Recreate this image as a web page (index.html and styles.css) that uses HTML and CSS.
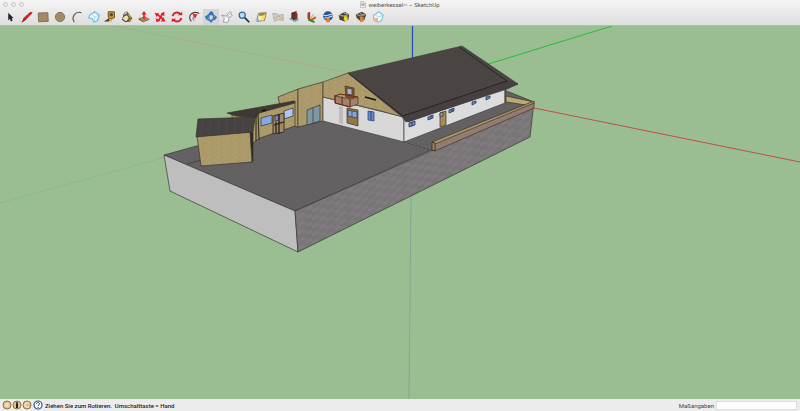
FILE: index.html
```html
<!DOCTYPE html>
<html lang="de">
<head>
    <meta charset="UTF-8">
    <meta name="viewport" content="width=device-width, initial-scale=1.0">
    <title>weiberkessel~ – SketchUp</title>
    <link rel="stylesheet" href="styles.css">
</head>
<body>
    <header class="window-header">
        <div class="titlebar">
            <div class="window-buttons">
                <button aria-label="Schließen"></button>
                <button aria-label="Minimieren"></button>
                <button aria-label="Zoomen"></button>
            </div>
            <div class="title">
                <svg class="doc-icon" viewBox="0 0 6 7"><path d="M.5.5h3.5l1.5 1.5v4.5h-5z" fill="#eee" stroke="#aaa" stroke-width=".6"/><path d="M1.500 2h3v3h-3z" fill="#d4a797"/></svg>
                <span>weiberkessel~ – SketchUp</span>
            </div>
        </div>
        <nav class="toolbar">
            <button aria-label="Auswählen"><svg viewBox="0 0 16 16"><path d="M6 3v9l2-2 1 3 2-1-1-3h2z" fill="#222"/></svg></button>
            <button aria-label="Linie"><svg viewBox="0 0 16 16"><path d="M2 14l2-5 8-7 2 1-7 8z" fill="#d3202b"/><path d="M2 14l4-3M11 5l3-2" stroke="#532224"/></svg></button>
            <button aria-label="Rechteck"><svg viewBox="0 0 16 16"><path d="M2.500 3.500l11-.5.5 10-11 .5z" fill="#a28a65" stroke="#7a6a50"/></svg></button>
            <button aria-label="Kreis"><svg viewBox="0 0 16 16"><circle cx="8" cy="8" r="5.300" fill="#a28a65" stroke="#7a6a50"/></svg></button>
            <button aria-label="Bogen"><svg viewBox="0 0 16 16"><path d="M5 14C1 8 6 1 13 3" fill="none" stroke="#555" stroke-width="1.300"/></svg></button>
            <button aria-label="Komponente"><svg viewBox="0 0 16 16"><path d="M3 6l6-4 5 4-2 6-4 2-2-4-4-1z" fill="#f0f8fa" stroke="#72bfdf" stroke-width="1.400"/><path d="M6 6l3 2 4-2M9 8l-1 5" fill="none" stroke="#9dd4e8"/></svg></button>
            <button aria-label="Maßband"><svg viewBox="0 0 16 16"><path d="M6 2h7v7l-5 1-2-2z" fill="#df9c17" stroke="#574220"/><circle cx="9.500" cy="5.500" r="2" fill="#4d4b45"/><path d="M1 13l6-4 3 1-3 3z" fill="#47413b"/><path d="M7 10h4l-1 3H7z" fill="#e5b31f"/></svg></button>
            <button aria-label="Farbeimer"><svg viewBox="0 0 16 16"><path d="M4 6l5-3 5 6-2 4-6 1-4-3z" fill="#59513c"/><path d="M5 7l3-1 2 3-3 4-4-3z" fill="#e8dfbf"/><path d="M9 5l4 4M11 10l1 3" stroke="#bda52e" stroke-width="1.500"/><path d="M4 8c0-6 4-7 6-4" fill="none" stroke="#555"/></svg></button>
            <button aria-label="Drücken/Ziehen"><svg viewBox="0 0 16 16"><path d="M2 9l7-2 5 3-7 3z" fill="#ad8154"/><path d="M2 9v2l5 3 7-3v-1l-7 3z" fill="#6b5138"/><path d="M8 1L5 5h2v5h2V5h2z" fill="#e12325"/></svg></button>
            <button aria-label="Verschieben"><svg viewBox="0 0 16 16"><path d="M5 5l7 6M11 4l-5 9" stroke="#e41c22" stroke-width="2"/><path d="M2 3l5 1-3 4zM9 4l4-2v5zM14 13l-5 0 3-5zM3 9l5 3-4 2z" fill="#e41c22"/></svg></button>
            <button aria-label="Drehen"><svg viewBox="0 0 16 16"><path d="M3 7a5 5 0 0 1 9-2M13 9a5 5 0 0 1-9 2" fill="none" stroke="#dd1e25" stroke-width="2"/><path d="M9 6h5V2zM7 10H2v4z" fill="#dd1e25"/></svg></button>
            <button aria-label="Versatz"><svg viewBox="0 0 16 16"><path d="M5 13C0 7 6 0 14 4" fill="none" stroke="#444" stroke-width="1.200"/><path d="M8 12C6 9 7 7 10 7" fill="none" stroke="#555"/><path d="M6 4l6 1-3 5z" fill="#df2528"/></svg></button>
            <button class="active" aria-label="Rotieren"><svg viewBox="0 0 16 16"><path d="M8 2c-4 3-3 9 0 12M2 8c4-4 9-3 12 0M2 8c2 5 9 5 12 0M8 2c4 2 4 8 0 12" fill="none" stroke="#2f75c4" stroke-width="1.300"/><path d="M5 5l4-4 2 5zM1 7h5l-3 4zM11 8l4 0-3 4z" fill="#2f75c4"/></svg></button>
            <button aria-label="Hand"><svg viewBox="0 0 16 16"><path d="M4 14l1-5-3-3 5 1 4-5 2 1-1 2 2 1-4 4-1 4z" fill="#fff" stroke="#929292"/><path d="M7 8l4-3M8 9l4-2" stroke="#aaa"/></svg></button>
            <button aria-label="Zoom"><svg viewBox="0 0 16 16"><path d="M8 8l6 6" stroke="#202832" stroke-width="2"/><circle cx="6" cy="6" r="3.500" fill="#b9dbf0" stroke="#366a96" stroke-width="1.400"/></svg></button>
            <button aria-label="Karte"><svg viewBox="0 0 16 16"><path d="M5 4l9-1-2 9-9 1z" fill="#faf0bf" stroke="#777060"/><path d="M6 3h7l-1 3-6 1z" fill="#a88448"/><path d="M9 7h3l-1 5H8z" fill="#ffe620"/><path d="M2 10h4l-1 3H2z" fill="#8dbfd8"/></svg></button>
            <button aria-label="Gelände" disabled><svg viewBox="0 0 16 16"><path d="M2 4l4 0 3 2 5-1v7l-6-1-4 2z" fill="#d4c9bc" stroke="#b5aca1"/><path d="M4 9l5-2 4 3" fill="none" stroke="#b6a89a"/></svg></button>
            <button aria-label="Gebäude"><svg viewBox="0 0 16 16"><path d="M2 10l5-2 7 3-5 3z" fill="#5fb2c9"/><path d="M5 3l6-2v9l-4 2-2-2z" fill="#682a20"/><path d="M9 3l3 1v6l-3 1z" fill="#7f3527"/><path d="M6 10v2l3 1" stroke="#e0aa7c" fill="none"/></svg></button>
            <button aria-label="Position"><svg viewBox="0 0 16 16"><path d="M4 3l3-1v10l-3-2z" fill="#b13727"/><path d="M6 11l7-4 1 2-5 4z" fill="#bd6c1f"/><path d="M5 11l7 3" stroke="#25852d" stroke-width="2"/><path d="M7 10l4-5" stroke="#d19333"/></svg></button>
            <button aria-label="Google Earth"><svg viewBox="0 0 16 16"><circle cx="8" cy="7" r="5.500" fill="#24559c"/><path d="M3 6c4 2 7-2 10-1M4 9c4 1 6-2 9-2" stroke="#d4e3ef" fill="none" stroke-width="1.300"/><path d="M6 9h4v5H6v-3z" fill="#df8128"/></svg></button>
            <button aria-label="Modelle laden"><svg viewBox="0 0 16 16"><path d="M2 6l7-4 5 3-1 6-4 2-6-2z" fill="#484039"/><path d="M3 6l5 1 5-2M8 3l4 2" stroke="#aa9e82" fill="none" stroke-width="1.500"/><path d="M8 7h4v3h1l-3 4-3-4h1z" fill="#eadb20"/></svg></button>
            <button aria-label="Modelle teilen"><svg viewBox="0 0 16 16"><path d="M2 5l7-3 5 3-2 6-4 2-5-4z" fill="#52453b"/><path d="M3 5l5 2 5-2M7 4l4 2" stroke="#a9947d" fill="none" stroke-width="1.400"/><path d="M7 8h4v5l-4 1v-4z" fill="#e97e26"/></svg></button>
            <button aria-label="Komponente teilen"><svg viewBox="0 0 16 16"><path d="M3 6l6-4 5 4-2 6-4 2-5-4z" fill="#eff8fa" stroke="#86c5de" stroke-width="1.400"/><path d="M5 6l4 2 4-2" fill="none" stroke="#9ad1e2"/><path d="M4 9h4v4H3v-3z" fill="#e8b58d"/></svg></button>
        </nav>
    </header>

    <main class="viewport">
        <svg class="model" viewBox="0 26 800 373" preserveAspectRatio="xMidYMid slice" role="img" aria-label="3D-Modell">
            <defs>
                <pattern id="brick" width="14" height="8" patternUnits="userSpaceOnUse" patternTransform="matrix(1 -.44 0 1 298 211)">
                    <rect width="14" height="8" fill="#7c7779"/>
                    <path d="M0 2h8M7 6h7" stroke="#736e70" stroke-width="1.200"/>
                    <path d="M8 2h6M0 6h7" stroke="#858083" stroke-width="1.200"/>
                </pattern>
                <pattern id="paving" width="5" height="4" patternUnits="userSpaceOnUse" patternTransform="matrix(1 -.42 .9 .4 0 0)">
                    <rect width="5" height="4" fill="#656264"/>
                    <path d="M0 .5h5M1 0v4" stroke="#5e5b5d" stroke-width=".6"/>
                </pattern>
                <pattern id="stone" width="9" height="5" patternUnits="userSpaceOnUse">
                    <rect width="9" height="5" fill="#ad9b6c"/>
                    <path d="M0 1h6M3 3h5" stroke="#a49163" stroke-width=".7"/>
                    <path d="M1 2h3" stroke="#b5a374" stroke-width=".8"/>
                </pattern>
                <pattern id="tiles" width="4" height="4" patternUnits="userSpaceOnUse" patternTransform="rotate(-14)">
                    <rect width="4" height="4" fill="#4b4644"/>
                    <path d="M0 1h4" stroke="#464140" stroke-width=".6"/>
                </pattern>
            </defs>

            <rect x="-400" y="-400" width="1600" height="1200" fill="#9abe91"/>

            <!-- axes -->
            <g fill="none" stroke-width=".8">
                <path d="M412.500 26v35" stroke="#244cb0" stroke-width="1.200"/>
                <path d="M411 194l-2 205" stroke="#7f9f94"/>
                <path d="M485 65l127-39" stroke="#28bc36" stroke-width="1"/>
                <path d="M166 157L0 203" stroke="#72b575" stroke-dasharray="1 1"/>
                <path d="M534 108l266 54" stroke="#bd5141" stroke-width="1"/>
                <path d="M348 73L115 26" stroke="#b19b79" stroke-dasharray="1 1"/>
            </g>

            <!-- ground slab -->
            <g stroke="#383638" stroke-width=".7" stroke-linejoin="round">
                <path d="M164 155l65-18 95-22 180-25 30 12-101 47-138 62z" fill="url(#paving)"/>
                <path d="M164 155l131 56 3 41-128-61z" fill="#bfbebf"/>
                <path d="M295 211l138-61 101-48-4 35-232 115z" fill="url(#brick)"/>
                <path d="M187 164l22-6" fill="none"/>
            </g>

            <!-- annex -->
            <g stroke="#3b3327" stroke-width=".7" stroke-linejoin="round">
                <path d="M278 97l20-8v38l-4-1-14-20z" fill="url(#stone)"/>
                <path d="M298 89l25-7v39l-25 6z" fill="url(#stone)"/>
                <path d="M232 115l26-2 37-12v25l-35 12-7 5-21 3z" fill="url(#stone)"/>
                <path d="M227 113l67-12 1 2-36 10-3 5-20-2z" fill="#3e3937"/>
                <path d="M258 113l1 27M256 116v25" fill="none" stroke-width="1.200"/>
                <path d="M307 110l13-5v16l-13 4z" fill="#7c98a4"/>
                <path d="M313 108v15" fill="none"/>
                <path d="M261 118l11-3v8l-11 3z" fill="#86a6df"/>
                <path d="M284 111l9-3v8l-9 3z" fill="#abc6f2"/>
                <path d="M273 116l11-3v19l-11 2z" fill="#a1896a" stroke-width="1"/>
                <path d="M275 116l4-1v5l-4 1z" fill="#668bda"/>
                <path d="M279 114v20M274 125l10-3M276 122v11" fill="none" stroke="#1e1a17" stroke-width="1.200"/>
                <path d="M262 111l4-1" stroke="#111" fill="none" stroke-width="1.500"/>
            </g>

            <!-- shed -->
            <g stroke="#38332c" stroke-width=".7" stroke-linejoin="round">
                <path d="M249 133l4-1v29l-2 2z" fill="#292821"/>
                <path d="M197 136l53-4 2 30-51 4z" fill="url(#stone)"/>
                <path d="M198 119l57-2-2 15-57 5z" fill="#474242"/>
                <path d="M203 119l-2 17M211 119l-2 16M219 118l-1 17M227 118l-1 16M235 118v16M243 118v15M250 117v15" stroke="#524c4b" fill="none"/>
            </g>

            <!-- main house -->
            <g stroke="#403d3c" stroke-width=".7" stroke-linejoin="round">
                <path d="M323 97l81 20v25l-81-21z" fill="#d8d8d9"/>
                <path d="M404 117l101-29v15l-101 39z" fill="#dcdcdd"/>
                <path d="M323 82l25-9 55 44-22-6-58-14z" fill="url(#stone)"/>
                <path d="M348 73l114-27 56 38-11 5-101 33-4-5z" fill="url(#tiles)"/>
                <path d="M403 116l104-35 11 3-110 38z" fill="#464140"/>
                <path d="M403 116l104-35-48-34M348 73l55 43" fill="none" stroke="#181717"/>
                <path d="M342 107v17M340 106v17" stroke="#8a8a8a" fill="none"/>
            </g>
            <g stroke="#3c3325" stroke-width=".7">
                <path d="M345 86l9 2v10l-8-1z" fill="#8d552d"/>
                <path d="M347 88l5 1v6l-5-1z" fill="#a7b1d4"/>
                <path d="M347 108l11 2v16l-11-3z" fill="#917845"/>
                <path d="M348 110l9 2v6l-9-2z" fill="#7ea8eb"/>
                <path d="M352 111v6" />
                <path d="M335 96l16 3 7-2v7l-8 3-15-4z" fill="#a4806a" stroke="#542a19"/>
                <path d="M335 96l5-2 18 3M335 95v8l15 4v-8M342 97v8" fill="none" stroke="#602917" stroke-width="1"/>
                <path d="M365 97l11 3" stroke="#171511" stroke-width="1.800"/>
                <path d="M368 111l6 1v9l-6-1z" fill="#628bd1" stroke="#293d68"/>
                <path d="M371 111v9" stroke="#1c2737"/>
                <path d="M440 113l6-2v14l-6 2z" fill="#a58b51"/>
                <path d="M440 113l3-1v4l-3 1z" fill="#8197b7"/>
            </g>
            <g fill="#6689cc" stroke="#263653" stroke-width=".8">
                <path d="M409 123l6-2v4l-6 2zM412 122v4M428 117l5-2v3l-5 2zM431 116v3M449 110l5-2v3l-5 2zM452 109v3M472 102l4-1v2l-4 2zM486 97l4-1v2l-4 2z"/>
            </g>

            <!-- garden wall -->
            <g stroke="#403629" stroke-width=".7" stroke-linejoin="round">
                <path d="M506 96l28 6-8 3-20-3z" fill="#b9a977"/>
                <path d="M434 143l100-41v6l-99 43z" fill="#927b71"/>
                <path d="M432 142l102-41v2l-99 41z" fill="#a7976b"/>
                <path d="M432 142l3 1v8l-3-1z" fill="#9f8856" stroke-width="1"/>
                <path d="M404 142l30 9" stroke-dasharray="2 2" fill="none"/>
                <path d="M505 88v15" fill="none"/>
            </g>
        </svg>
    </main>

    <footer class="statusbar">
        <div class="status-icons">
            <button class="status-icon" aria-label="Georeferenz"><svg viewBox="0 0 10 10"><circle cx="5" cy="5" r="4" fill="#dfc292" stroke="#987238"/><circle cx="5" cy="5" r="2" fill="#eee2cc"/></svg></button>
            <button class="status-icon" aria-label="Urheber"><svg viewBox="0 0 10 10"><circle cx="5" cy="5" r="4" fill="#dfc292" stroke="#987238"/><circle cx="5" cy="3" r="1" fill="#222"/><path d="M4 4h2v4H4z" fill="#222"/></svg></button>
            <button class="status-icon" aria-label="Anmelden"><svg viewBox="0 0 10 10"><circle cx="5" cy="5" r="4" fill="#dfc292" stroke="#987238"/><path d="M7 3.500a2.300 2.300 0 1 0 0 3" fill="none" stroke="#fff3df"/></svg></button>
            <button class="status-icon help" aria-label="Hilfe"><svg viewBox="0 0 10 10"><circle cx="5" cy="5" r="4" fill="#fff" stroke="#275b8a" stroke-width="1.200"/><path d="M3.500 4c0-2 3-2 3 0 0 1-1.500 1-1.500 2M5 7v1" fill="none" stroke="#173c66"/></svg></button>
        </div>
        <span class="hint">Ziehen Sie zum Rotieren.&nbsp; Umschalttaste = Hand</span>
        <label class="measure-label" for="measure">Maßangaben</label>
        <input type="text" id="measure">
    </footer>
</body>
</html>
```
FILE: styles.css
```css
* {
    box-sizing: border-box;
}
body {
    margin: 0;
    height: 100vh;
    display: flex;
    flex-direction: column;
    overflow: hidden;
    font-family: Roboto, "Liberation Sans", sans-serif;
    font-size: 6px;
    background-color: #ececec;
}
button {
    padding: 0;
    border: none;
    background: none;
}
svg {
    display: block;
}
.window-header {
    background: linear-gradient(#f5f5f5, #dedede);
    border-bottom: 1px solid #b5bcb3;
}
.titlebar {
    display: grid;
    grid-template-columns: 1fr auto 1fr;
    align-items: center;
    height: 9px;
}
.window-buttons {
    display: flex;
    gap: 3px;
    padding-left: 3px;
}
.window-buttons button {
    width: 5px;
    height: 5px;
    border: 1px solid #c2c2c2;
    border-radius: 50%;
    background-color: #ededed;
}
.title {
    display: flex;
    align-items: center;
    gap: 2px;
    line-height: 8px;
    color: #555;
}
.doc-icon {
    width: 6px;
    height: 7px;
}
.toolbar {
    display: flex;
    justify-content: space-between;
    max-width: 386px;
    padding-left: 2px;
}
.toolbar button {
    width: 16px;
    height: 16px;
    padding: 1px;
}
.toolbar svg {
    width: 14px;
    height: 14px;
}
.toolbar .active {
    background-color: #d6d6d6;
}
.viewport {
    flex: 1;
    min-height: 0;
}
.model {
    width: 100%;
    height: 100%;
}
.statusbar {
    display: flex;
    align-items: center;
    height: 12px;
    padding: 0 3px 0 2px;
    background-color: #ececec;
    color: #222;
}
.status-icons {
    display: flex;
}
.status-icon svg {
    width: 10px;
    height: 10px;
}
.help {
    margin-left: 1px;
}
.hint {
    margin-left: 2px;
    white-space: nowrap;
    font-weight: 500;
}
.measure-label {
    margin-left: auto;
    margin-right: 2px;
    color: #444;
}
#measure {
    width: 81px;
    height: 9px;
    padding: 0 2px;
    border: 1px solid #ddd;
    background-color: white;
    font: inherit;
}
```
